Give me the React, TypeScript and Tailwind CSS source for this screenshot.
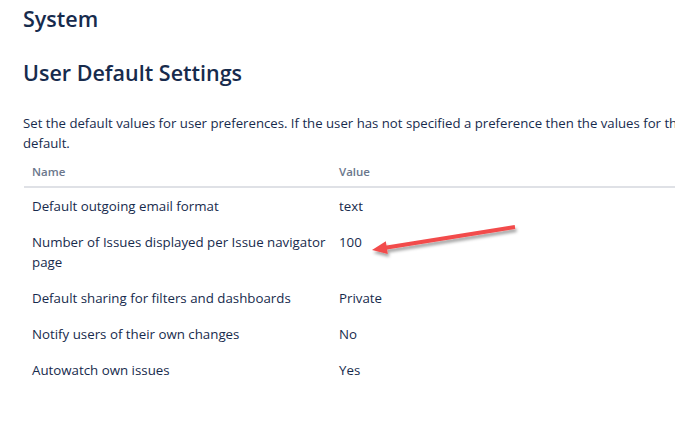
import React from "react";

const rows: { name: string; value: string }[] = [
  { name: "Default outgoing email format", value: "text" },
  { name: "Number of Issues displayed per Issue navigator page", value: "100" },
  { name: "Default sharing for filters and dashboards", value: "Private" },
  { name: "Notify users of their own changes", value: "No" },
  { name: "Autowatch own issues", value: "Yes" },
];

function Callout() {
  return (
    <svg
      className="pointer-events-none absolute left-0 top-0"
      width="675"
      height="425"
      viewBox="0 0 675 425"
    >
      <defs>
        <filter id="callout-shadow" x="-20%" y="-50%" width="140%" height="200%">
          <feDropShadow dx="1.5" dy="3" stdDeviation="1.8" floodColor="#000" floodOpacity="0.35" />
        </filter>
      </defs>
      <polygon
        points="514.7,225 386.5,245.6 385.8,241.2 372,250 387.8,254 387.1,249.6 515.3,229"
        fill="#f24b4b"
        filter="url(#callout-shadow)"
      />
    </svg>
  );
}

export default function App() {
  return (
    <div
      className="relative h-[425px] w-[675px] overflow-hidden bg-white text-[#172b4d]"
      style={{ fontFamily: '"Open Sans", "Noto Sans", sans-serif' }}
    >
      <div className="w-[900px] pl-[23px]">
        <h2 className="pt-[5px] text-[21.5px] font-semibold leading-[28px]">System</h2>
        <h2 className="mt-[26px] text-[21.5px] font-semibold leading-[28px]">User Default Settings</h2>
        <p className="mt-[26px] w-[850px] text-[13.2px] leading-[20px]">
          Set the default values for user preferences. If the user has not specified a preference then the
          values for these settings will be used as default.
        </p>
        <table className="ml-[1px] mt-[5px] w-[800px] border-collapse text-[13.3px] leading-[20px]">
          <thead>
            <tr className="border-b-2 border-[#dfe1e6]">
              <th className="w-[307px] py-[4px] pl-[8px] pr-0 text-left text-[11.5px] font-semibold text-[#6b778c]">
                Name
              </th>
              <th className="px-[8px] py-[4px] text-left text-[11.5px] font-semibold text-[#6b778c]">
                Value
              </th>
            </tr>
          </thead>
          <tbody>
            {rows.map((r) => (
              <tr key={r.name}>
                <td className="w-[307px] py-[8px] pl-[8px] pr-0 align-top">{r.name}</td>
                <td className="px-[8px] py-[8px] align-top">{r.value}</td>
              </tr>
            ))}
          </tbody>
        </table>
      </div>
      <Callout />
    </div>
  );
}
